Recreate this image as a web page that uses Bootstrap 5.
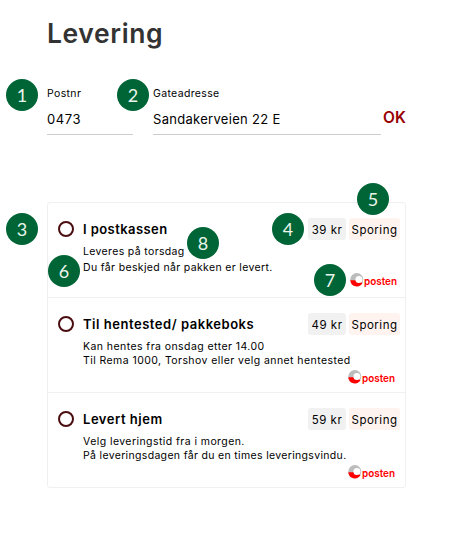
<!DOCTYPE html>
<html lang="no">
<head>
<meta charset="utf-8">
<meta name="viewport" content="width=device-width, initial-scale=1">
<title>Levering</title>
<link href="https://cdn.jsdelivr.net/npm/bootstrap@5.3.0/dist/css/bootstrap.min.css" rel="stylesheet">
<style>
body{font-family:Inter,"Liberation Sans",sans-serif;color:#000;height:537px;overflow:hidden}
.page{width:359px;margin-left:47px;padding-top:15px}
.title{font-size:26.5px;line-height:36px;font-weight:600;color:#333;letter-spacing:.6px}
.address{margin-top:34px;height:50px}
.field{border-bottom:1px solid #ccc}
.f-zip{width:86px}.f-street{width:228px;margin-left:20px}
.lbl{font-size:10.5px;line-height:17px;letter-spacing:.35px}
.val{font-size:13px;line-height:20px;letter-spacing:.6px;margin-top:7px}
.street{letter-spacing:.3px}
.ok{color:#900;font-size:15.5px;line-height:20px;font-weight:600;margin:23px 0 0 2px}
.options{margin-top:67px;border:1px solid #f0f0f0;border-radius:3px}
.option{height:95px;padding:15px 5px 0 10px}
.option:first-child{height:94px}
.option+.option{border-top:1px solid #f0f0f0}
.ring{width:16px;height:16px;border:2px solid #4a0d10;border-radius:50%;margin-right:9px}
.name{font-size:13px;line-height:22px;font-weight:600;letter-spacing:.53px}
.option:first-child .name{letter-spacing:.43px}
.chip{height:22px;line-height:24px;border-radius:3px;font-size:11.5px;letter-spacing:.5px;text-align:center}
.price{width:38px;background:#f1f1f1}.track{width:51px;background:#fff3ef;margin-left:3px}
.desc{font-size:10.5px;line-height:14px;letter-spacing:.35px;margin:5px 0 0 25px;white-space:nowrap}
.option:first-child .desc{line-height:16px;margin-top:4px}
.d3,.d4,.d5{letter-spacing:.43px}
.d6{letter-spacing:.33px}
.logo{width:48px;height:16px;margin:2px 4px 0 auto}
.option:first-child .logo{margin:-3px 2px 0 auto}
.num{width:32px;height:32px;border-radius:50%;background:#006536;color:#eaf5ec;font:400 18px/33px Lato,sans-serif;text-align:center}
.n1{left:6px;top:79px}.n2{left:117px;top:79px}.n3{left:6px;top:213px}.n4{left:272px;top:213px}
.n5{left:357px;top:183px}.n6{left:48px;top:255px}.n7{left:314px;top:264px}.n8{left:187px;top:227px}
</style>
<script src="https://cdn.jsdelivr.net/npm/bootstrap@5.3.0/dist/js/bootstrap.bundle.min.js"></script>
</head>
<body class="position-relative bg-white">
<svg class="d-none"><defs><symbol id="posten" viewBox="0 0 48 16">
<circle cx="6.8" cy="6.6" r="6.5" fill="#bcbcbc"/>
<path d="M.3 7.2a6.5 6.5 0 0 0 12.2 2.8L7 7.2z" fill="#f00"/>
<circle cx="8.9" cy="6.4" r="3.5" fill="#fff"/>
<text x="14" y="12" font-family="Inter" font-size="10.8" font-weight="600" fill="#f00" textLength="33" lengthAdjust="spacingAndGlyphs">posten</text>
</symbol></defs></svg>
<main class="page">
<h1 class="title mb-0">Levering</h1>
<div class="address d-flex">
<div class="field f-zip"><div class="lbl">Postnr</div><div class="val">0473</div></div>
<div class="field f-street"><div class="lbl">Gateadresse</div><div class="val street">Sandakerveien 22 E</div></div>
<div class="ok">OK</div>
</div>
<div class="options">
<div class="option"><div class="d-flex align-items-center"><span class="ring"></span><span class="name me-auto">I postkassen</span><span class="chip price">39 kr</span><span class="chip track">Sporing</span></div>
<div class="desc"><div class="d1">Leveres på torsdag</div><div class="d2">Du får beskjed når pakken er levert.</div></div><svg class="logo d-block"><use href="#posten"/></svg></div>
<div class="option"><div class="d-flex align-items-center"><span class="ring"></span><span class="name me-auto">Til hentested/ pakkeboks</span><span class="chip price">49 kr</span><span class="chip track">Sporing</span></div>
<div class="desc"><div class="d3">Kan hentes fra onsdag etter 14.00</div><div class="d4">Til Rema 1000, Torshov eller velg annet hentested</div></div><svg class="logo d-block"><use href="#posten"/></svg></div>
<div class="option"><div class="d-flex align-items-center"><span class="ring"></span><span class="name me-auto">Levert hjem</span><span class="chip price">59 kr</span><span class="chip track">Sporing</span></div>
<div class="desc"><div class="d5">Velg leveringstid fra i morgen.</div><div class="d6">På leveringsdagen får du en times leveringsvindu.</div></div><svg class="logo d-block"><use href="#posten"/></svg></div>
</div>
</main>
<span class="num n1 position-absolute">1</span><span class="num n2 position-absolute">2</span><span class="num n3 position-absolute">3</span><span class="num n4 position-absolute">4</span><span class="num n5 position-absolute">5</span><span class="num n6 position-absolute">6</span><span class="num n7 position-absolute">7</span><span class="num n8 position-absolute">8</span>
</body>
</html>
